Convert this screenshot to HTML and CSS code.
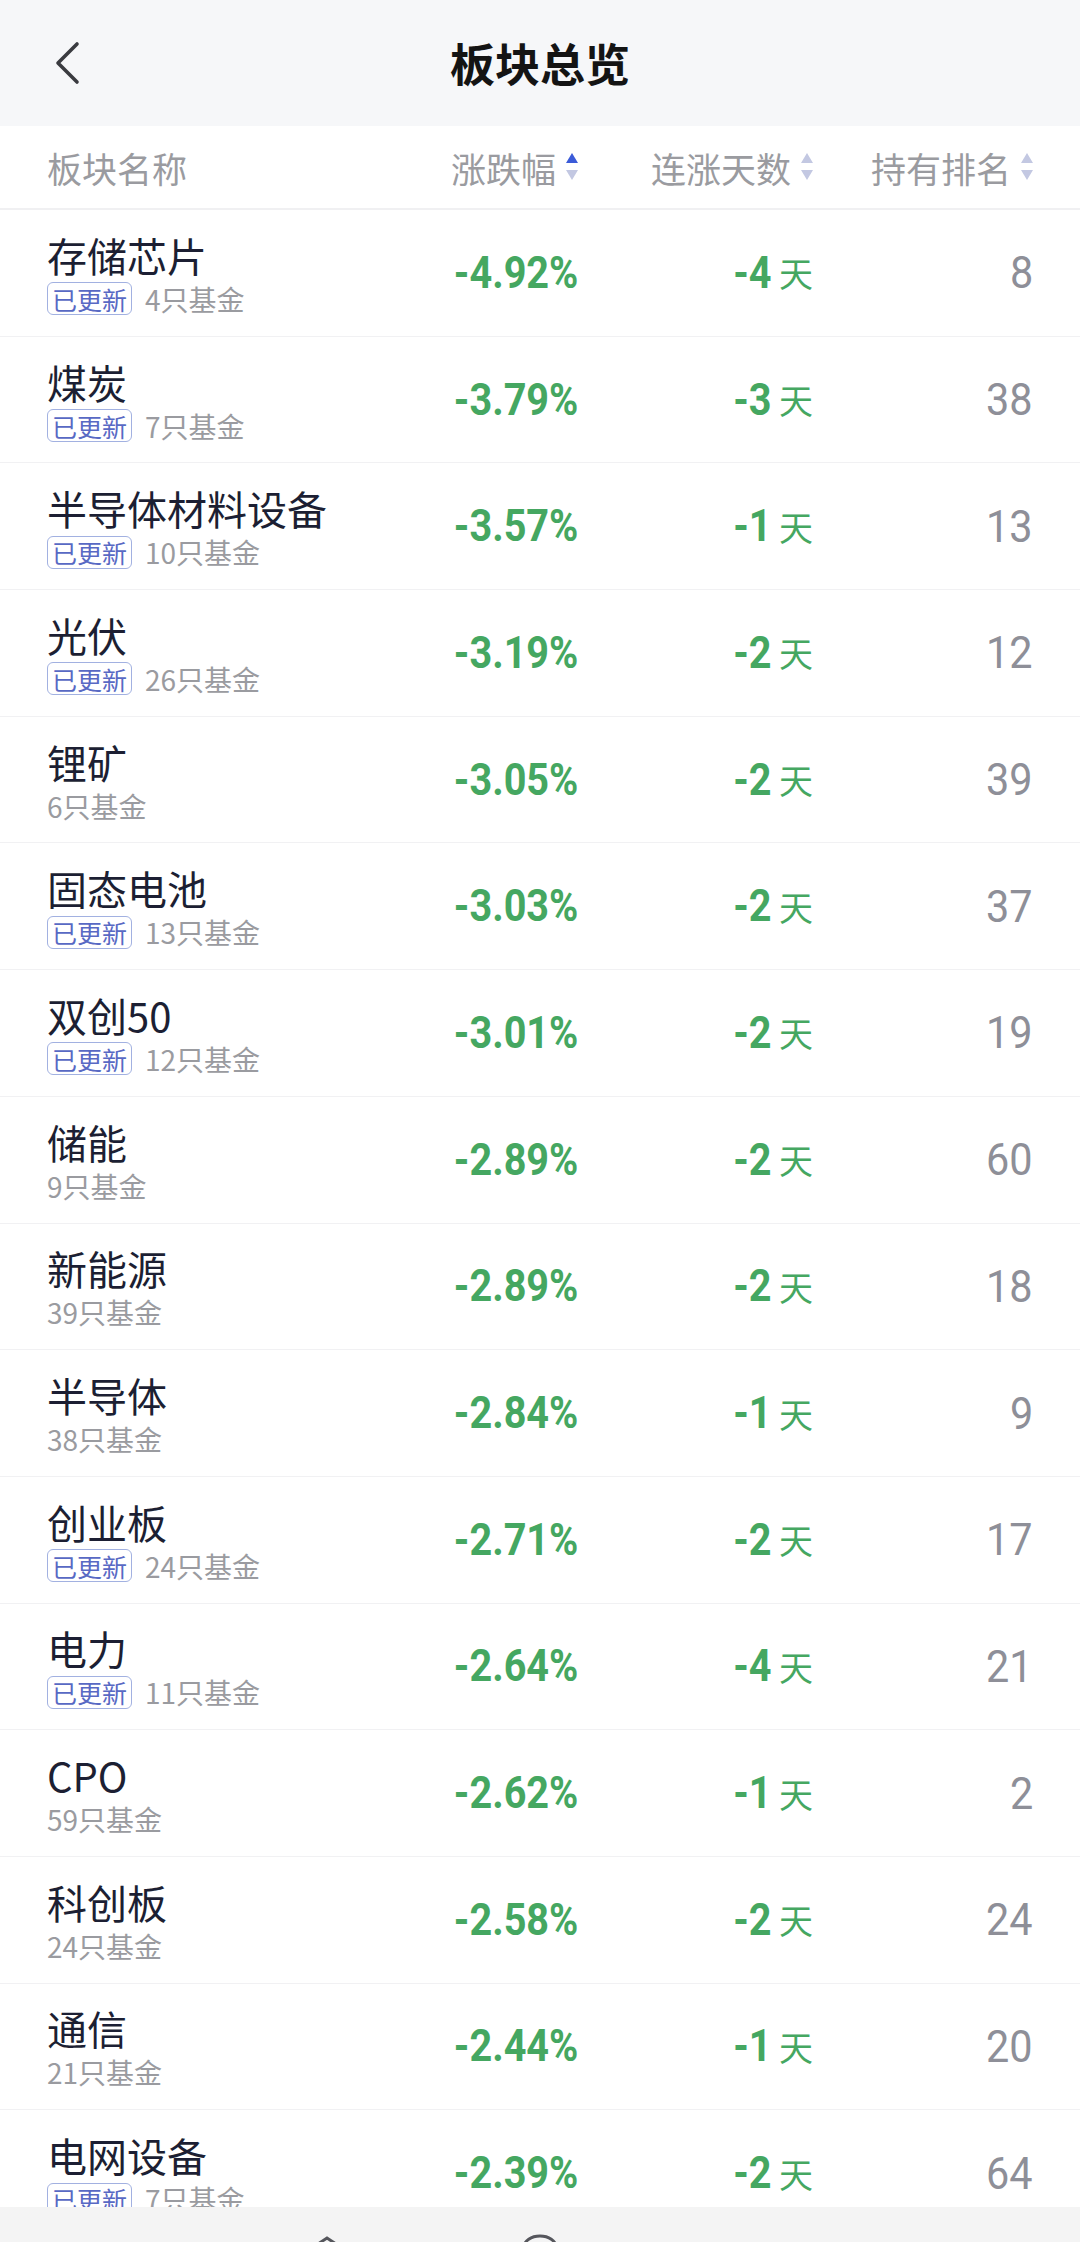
FILE: index.html
```html
<!DOCTYPE html>
<html lang="zh-CN">
  <head>
    <meta charset="UTF-8" />
    <meta name="viewport" content="width=device-width, initial-scale=1.0" />
    <title>板块总览</title>
    <link rel="stylesheet" href="styles.css">
  </head>
  <body>
    <div class="app">
      <!-- 1. 顶部导航 -->
      <header class="nav">
        <a class="nav-back" href="#">
          <svg width="30" height="44" viewBox="0 0 30 44">
            <path d="M24 3 L5 22 L24 41" fill="none" stroke="#3a3b40" stroke-width="3.6" stroke-linecap="round" stroke-linejoin="round" />
          </svg>
        </a>
        <h1 class="nav-title">板块总览</h1>
      </header>

      <!-- 2. 表头 -->
      <div class="thead">
        <div class="col col-name">板块名称</div>
        <div class="col col-rate">涨跌幅<svg class="sort" viewBox="0 0 12 28"><path class="up on" d="M0 10 L6 0 L12 10 Z" /><path class="down" d="M0 17 L12 17 L6 27 Z" /></svg></div>
        <div class="col col-days">连涨天数<svg class="sort" viewBox="0 0 12 28"><path class="up" d="M0 10 L6 0 L12 10 Z" /><path class="down" d="M0 17 L12 17 L6 27 Z" /></svg></div>
        <div class="col col-rank">持有排名<svg class="sort" viewBox="0 0 12 28"><path class="up" d="M0 10 L6 0 L12 10 Z" /><path class="down" d="M0 17 L12 17 L6 27 Z" /></svg></div>
      </div>

      <!-- 3. 列表 -->
      <ul class="list">
        <li class="row">
          <div class="col col-name"><p class="name">存储芯片</p><p class="sub"><span class="tag">已更新</span>4只基金</p></div>
          <div class="col col-rate"><span class="num">-4.92%</span></div>
          <div class="col col-days"><span class="num">-4</span><span class="day">天</span></div>
          <div class="col col-rank"><span class="rank">8</span></div>
        </li>
        <li class="row">
          <div class="col col-name"><p class="name">煤炭</p><p class="sub"><span class="tag">已更新</span>7只基金</p></div>
          <div class="col col-rate"><span class="num">-3.79%</span></div>
          <div class="col col-days"><span class="num">-3</span><span class="day">天</span></div>
          <div class="col col-rank"><span class="rank">38</span></div>
        </li>
        <li class="row">
          <div class="col col-name"><p class="name">半导体材料设备</p><p class="sub"><span class="tag">已更新</span>10只基金</p></div>
          <div class="col col-rate"><span class="num">-3.57%</span></div>
          <div class="col col-days"><span class="num">-1</span><span class="day">天</span></div>
          <div class="col col-rank"><span class="rank">13</span></div>
        </li>
        <li class="row">
          <div class="col col-name"><p class="name">光伏</p><p class="sub"><span class="tag">已更新</span>26只基金</p></div>
          <div class="col col-rate"><span class="num">-3.19%</span></div>
          <div class="col col-days"><span class="num">-2</span><span class="day">天</span></div>
          <div class="col col-rank"><span class="rank">12</span></div>
        </li>
        <li class="row">
          <div class="col col-name"><p class="name">锂矿</p><p class="sub">6只基金</p></div>
          <div class="col col-rate"><span class="num">-3.05%</span></div>
          <div class="col col-days"><span class="num">-2</span><span class="day">天</span></div>
          <div class="col col-rank"><span class="rank">39</span></div>
        </li>
        <li class="row">
          <div class="col col-name"><p class="name">固态电池</p><p class="sub"><span class="tag">已更新</span>13只基金</p></div>
          <div class="col col-rate"><span class="num">-3.03%</span></div>
          <div class="col col-days"><span class="num">-2</span><span class="day">天</span></div>
          <div class="col col-rank"><span class="rank">37</span></div>
        </li>
        <li class="row">
          <div class="col col-name"><p class="name">双创50</p><p class="sub"><span class="tag">已更新</span>12只基金</p></div>
          <div class="col col-rate"><span class="num">-3.01%</span></div>
          <div class="col col-days"><span class="num">-2</span><span class="day">天</span></div>
          <div class="col col-rank"><span class="rank">19</span></div>
        </li>
        <li class="row">
          <div class="col col-name"><p class="name">储能</p><p class="sub">9只基金</p></div>
          <div class="col col-rate"><span class="num">-2.89%</span></div>
          <div class="col col-days"><span class="num">-2</span><span class="day">天</span></div>
          <div class="col col-rank"><span class="rank">60</span></div>
        </li>
        <li class="row">
          <div class="col col-name"><p class="name">新能源</p><p class="sub">39只基金</p></div>
          <div class="col col-rate"><span class="num">-2.89%</span></div>
          <div class="col col-days"><span class="num">-2</span><span class="day">天</span></div>
          <div class="col col-rank"><span class="rank">18</span></div>
        </li>
        <li class="row">
          <div class="col col-name"><p class="name">半导体</p><p class="sub">38只基金</p></div>
          <div class="col col-rate"><span class="num">-2.84%</span></div>
          <div class="col col-days"><span class="num">-1</span><span class="day">天</span></div>
          <div class="col col-rank"><span class="rank">9</span></div>
        </li>
        <li class="row">
          <div class="col col-name"><p class="name">创业板</p><p class="sub"><span class="tag">已更新</span>24只基金</p></div>
          <div class="col col-rate"><span class="num">-2.71%</span></div>
          <div class="col col-days"><span class="num">-2</span><span class="day">天</span></div>
          <div class="col col-rank"><span class="rank">17</span></div>
        </li>
        <li class="row">
          <div class="col col-name"><p class="name">电力</p><p class="sub"><span class="tag">已更新</span>11只基金</p></div>
          <div class="col col-rate"><span class="num">-2.64%</span></div>
          <div class="col col-days"><span class="num">-4</span><span class="day">天</span></div>
          <div class="col col-rank"><span class="rank">21</span></div>
        </li>
        <li class="row">
          <div class="col col-name"><p class="name">CPO</p><p class="sub">59只基金</p></div>
          <div class="col col-rate"><span class="num">-2.62%</span></div>
          <div class="col col-days"><span class="num">-1</span><span class="day">天</span></div>
          <div class="col col-rank"><span class="rank">2</span></div>
        </li>
        <li class="row">
          <div class="col col-name"><p class="name">科创板</p><p class="sub">24只基金</p></div>
          <div class="col col-rate"><span class="num">-2.58%</span></div>
          <div class="col col-days"><span class="num">-2</span><span class="day">天</span></div>
          <div class="col col-rank"><span class="rank">24</span></div>
        </li>
        <li class="row">
          <div class="col col-name"><p class="name">通信</p><p class="sub">21只基金</p></div>
          <div class="col col-rate"><span class="num">-2.44%</span></div>
          <div class="col col-days"><span class="num">-1</span><span class="day">天</span></div>
          <div class="col col-rank"><span class="rank">20</span></div>
        </li>
        <li class="row">
          <div class="col col-name"><p class="name">电网设备</p><p class="sub"><span class="tag">已更新</span>7只基金</p></div>
          <div class="col col-rate"><span class="num">-2.39%</span></div>
          <div class="col col-days"><span class="num">-2</span><span class="day">天</span></div>
          <div class="col col-rank"><span class="rank">64</span></div>
        </li>
      </ul>

      <!-- 4. 底部栏 (图标只露出顶端) -->
      <div class="tabbar">
        <svg width="1080" height="35" viewBox="0 0 1080 35">
          <path d="M318 37 L327 31 L336 37" fill="none" stroke="#55565c" stroke-width="3" stroke-linecap="round" />
          <path d="M524 40 A16 11 0 0 1 556 40" fill="none" stroke="#55565c" stroke-width="3" />
        </svg>
      </div>
    </div>
  </body>
</html>
```

FILE: styles.css
```css
/* 基本初始化 */
html,
body,
h1,
p,
ul {
  margin: 0;
  padding: 0;
}
body {
  background: #fff;
  font-family: "Noto Sans CJK SC", "Noto Sans", sans-serif;
  color: #1c1f33;
}
ul {
  list-style: none;
}

/* 整体框 */
.app {
  display: flex;
  flex-direction: column;
  width: 1080px;
  height: 2242px;
  overflow: hidden;
}

/************* 1. 顶部导航 *************/
.nav {
  position: relative;
  flex: none;
  display: flex;
  align-items: center;
  justify-content: center;
  height: 126px;
  background: #f6f7f9;
}
.nav-back {
  position: absolute;
  left: 53px;
  top: 41px;
  display: block;
  width: 30px;
  height: 44px;
}
.nav-title {
  font-size: 45px;
  font-weight: 700;
  color: #141414;
  line-height: 1;
  margin-top: -2px;
}

/************* 2. 表头 + 公共列宽 *************/
.thead,
.row {
  display: flex;
  align-items: center;
  padding: 0 47px;
}
.thead {
  flex: none;
  height: 84px;
  box-sizing: border-box;
  border-bottom: 2px solid #f0f0f2;
  font-size: 35px;
  color: #9a9ba0;
}
.col {
  display: flex;
  align-items: center;
  justify-content: flex-end;
}
.col-name {
  width: 333px;
  justify-content: flex-start;
}
.col-rate {
  width: 198px;
}
.col-days {
  width: 235px;
}
.col-rank {
  width: 220px;
}
/* 排序箭头 */
.sort {
  flex: none;
  width: 12px;
  height: 28px;
  margin-left: 10px;
}
.sort path {
  fill: #c3c8e2;
}
.sort path.on {
  fill: #3b5bd8;
}

/************* 3. 列表 *************/
.list {
  flex: 1;
  overflow: hidden;
}
.row {
  height: 126.7px;
  box-sizing: border-box;
  border-bottom: 1px solid #f1f1f3;
}
.row .col-name {
  flex-direction: column;
  align-items: flex-start;
  padding-top: 2px;
}
.name {
  font-size: 40px;
  line-height: 48px;
  color: #1c1f33;
}
.sub {
  display: flex;
  align-items: center;
  height: 36px;
  margin-top: 2px;
  font-size: 28px;
  color: #9a9ba0;
}
.tag {
  display: inline-flex;
  align-items: center;
  justify-content: center;
  box-sizing: border-box;
  height: 33px;
  padding: 0 4px;
  margin-right: 13px;
  border: 1.5px solid #a2b1e1;
  border-radius: 6px;
  font-size: 25px;
  color: #5869c4;
}

/* 数字 (窄体: Roboto 横向压缩) */
.num,
.rank {
  display: inline-block;
  font-family: "Roboto", sans-serif;
  line-height: 1;
  transform-origin: right center;
}
.num {
  font-size: 44px;
  font-weight: 700;
  color: #45a761;
  transform: scaleX(0.9);
}
.day {
  margin-left: 7px;
  font-size: 34px;
  color: #45a761;
}
.rank {
  font-size: 45px;
  color: #8e8f98;
  transform: scaleX(0.92);
}

/************* 4. 底部栏 *************/
.tabbar {
  flex: none;
  height: 35px;
  background: #f4f4f4;
}
.tabbar svg {
  display: block;
}
```
